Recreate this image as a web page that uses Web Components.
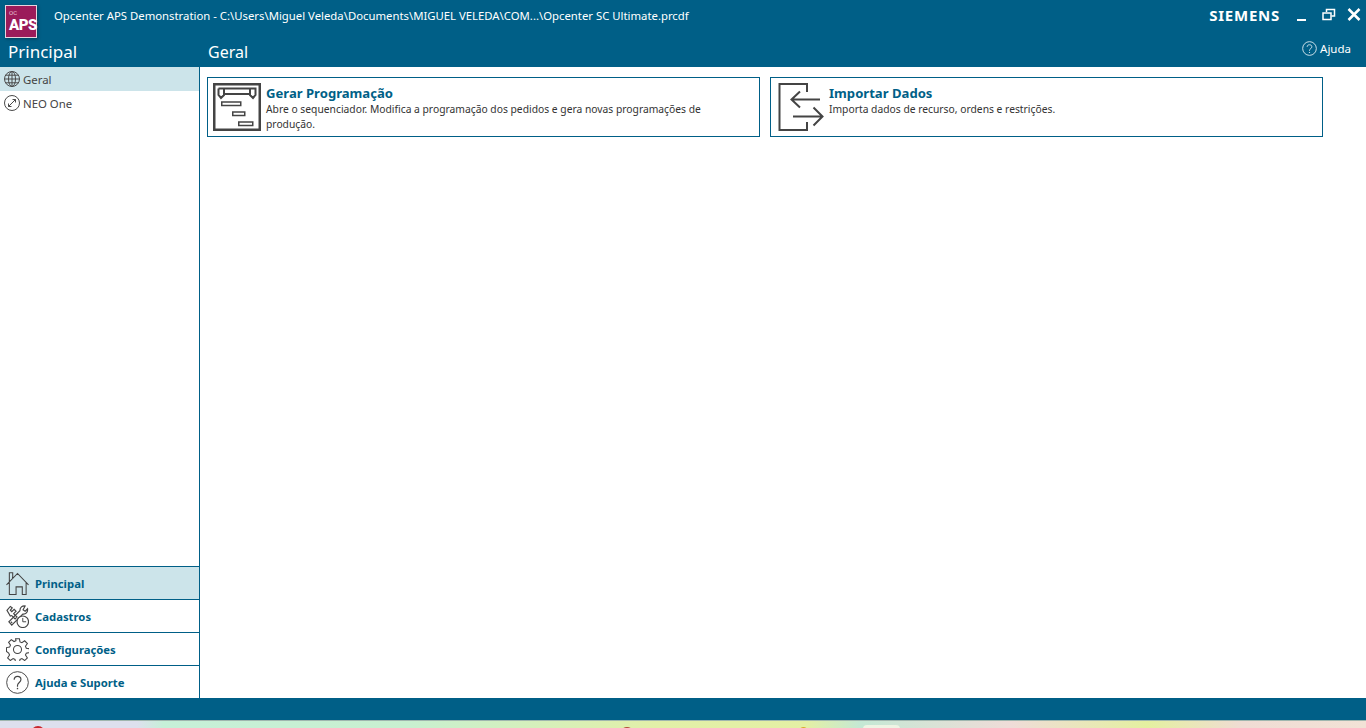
<!DOCTYPE html>
<html lang="pt">
<head>
<meta charset="utf-8">
<title>Opcenter APS</title>
<style>
  html, body { margin: 0; height: 100%; overflow: hidden; background: #fff; }
  body { font-family: "Noto Sans", "Open Sans", sans-serif; color: #333; }
</style>
</head>
<body>
<aps-app></aps-app>

<template id="icons">
  <svg data-name="globe" viewBox="1 1 16 16" fill="none" stroke="#4a4a4a" stroke-width="1"><circle cx="9" cy="9" r="7.500"/><ellipse cx="9" cy="9" rx="3.500" ry="7.500"/><path d="M9 1.500v15M1.500 9h15M2.600 5.200h12.800M2.600 12.800h12.800"/></svg>
  <svg data-name="link" viewBox="1 1 16 16" fill="none" stroke="#4a4a4a" stroke-width="1"><circle cx="9" cy="9" r="7.500"/><path d="M5.500 12.500l7-7M9.500 5.500h3v3M5.500 9.500v3h3"/></svg>
  <svg data-name="home" viewBox="0 0 24 24" fill="none" stroke="#444" stroke-width="1.100"><path d="M.5 13.500 12 1.500l11.500 12M3.500 10V.8h3.500v5.500M3.500 10v13.500h7v-8h6.500v8h4V11"/></svg>
  <svg data-name="tools" viewBox="0 0 24 24" fill="none" stroke="#444" stroke-width="1.200"><path d="M1 5.500 4.500 1.500 6.500 3 4.500 5.500l1.500 1.500 2.500-2.500 2 2L8 9l3.500 3.500-2 2L6 11 4.500 11.500Z"/><path d="M20 1c-3-.5-5.500 1.500-5.500 5L3 17.500 6 21 17.500 9.500c3 .5 5.500-2 5-5.500L20 6.500 17.800 5 20 1Z"/><path d="M5 17.500l1.500 1.500"/><circle cx="17.500" cy="17.500" r="6" fill="#fff"/><path d="M17.500 13.500v4h3.500" stroke-width="1"/></svg>
  <svg data-name="gear" viewBox="0 0 24 24" fill="none" stroke="#444" stroke-width="1.100"><circle cx="12" cy="12" r="4.200"/><path d="M10 .7h4l.6 3.400 2 .8 2.900-2 2.800 2.900-2 2.800.9 2 3.300.6v4l-3.300.6-.9 2 2 2.900-2.800 2.800-2.900-2-2 .9-.6 3.300h-4l-.6-3.300-2-.9-2.900 2-2.800-2.800 2-2.900-.9-2L.5 14v-4l3.300-.6.900-2-2-2.800 2.800-2.900 2.900 2 2-.8Z"/></svg>
  <svg data-name="help" viewBox="0 0 24 24" fill="none" stroke="#444" stroke-width="1"><circle cx="12" cy="12" r="11.300"/><path d="M8.500 9.200C8.500 6.800 10 5.600 12 5.600s3.600 1.300 3.600 3.300c0 3-3.600 3.200-3.600 6.300v1.300" stroke-width="1.200"/><path d="M11.300 18.300h1.400" stroke-width="1.500"/></svg>
  <svg data-name="gantt" viewBox="0 0 48 48" fill="none" stroke="#444"><rect x="1.250" y="1.250" width="45.500" height="45.500" stroke-width="2.500"/><path d="M5.500 5.500h37v6.500L40 15l-3-3V5.500M5.500 5.500v6.500L8 15l3-3V5.500M11 11h26" stroke-width="2"/><rect x="8.750" y="19" width="19" height="3.500" stroke-width="1.500"/><rect x="19.750" y="29" width="12" height="3.500" stroke-width="1.500"/><rect x="25.750" y="39" width="14" height="3.500" stroke-width="1.500"/></svg>
  <svg data-name="import" viewBox="0 0 48 48" fill="none" stroke="#444" stroke-width="2"><path d="M31 9V1H3.500v46H31v-8"/><path d="M44 16.500H15.500M24 8.500l-8.500 8 8.500 8"/><path d="M17 33.500h29M37.500 24.500l9 9-9 9"/></svg>
</template>

<script>
const iconBank = document.getElementById("icons").content;

function iconMarkup(name) {
  const svg = iconBank.querySelector(`[data-name="${name}"]`);
  return svg ? svg.outerHTML : "";
}

// small list row in the top of the side panel
class SideRow extends HTMLElement {
  constructor() {
    super();
    this.attachShadow({ mode: "open" });
  }
  connectedCallback() {
    const active = this.hasAttribute("active");
    this.shadowRoot.innerHTML = `
      <style>
        :host { display: flex; align-items: center; height: 24px; padding-left: 4px; gap: 3px;
                font-size: 11.4px; color: #444; background: ${active ? "#cce4ea" : "transparent"}; }
        svg { width: 16px; height: 16px; flex: none; }
      </style>
      ${iconMarkup(this.getAttribute("icon"))}<span><slot></slot></span>`;
  }
}

// big section button at the bottom of the side panel
class NavRow extends HTMLElement {
  constructor() {
    super();
    this.attachShadow({ mode: "open" });
  }
  connectedCallback() {
    const active = this.hasAttribute("active");
    this.shadowRoot.innerHTML = `
      <style>
        :host { display: flex; align-items: center; height: 32px; padding-left: 6px; gap: 6px;
                border-top: 1px solid #005f87; font-size: 11.3px; font-weight: 700; color: #005f87;
                background: ${active ? "#cce4ea" : "transparent"}; }
        svg { width: 23px; height: 23px; flex: none; }
      </style>
      ${iconMarkup(this.getAttribute("icon"))}<span><slot></slot></span>`;
  }
}

class ActionCard extends HTMLElement {
  constructor() {
    super();
    this.attachShadow({ mode: "open" });
  }
  connectedCallback() {
    this.shadowRoot.innerHTML = `
      <style>
        :host { display: flex; box-sizing: border-box; height: 60px; width: 553px; border: 1px solid #005f87;
                padding: 5px 0 0 5px; gap: 5px; }
        svg { width: 48px; height: 48px; flex: none; }
        h3 { margin: 1px 0 0; font-size: 13.1px; line-height: 18px; font-weight: 700; color: #005f87; }
        p { margin: 0; max-width: 470px; font-size: 10.3px; line-height: 15px; color: #333; }
      </style>
      ${iconMarkup(this.getAttribute("icon"))}
      <div><h3>${this.getAttribute("title")}</h3><p><slot></slot></p></div>`;
  }
}

class TitleBar extends HTMLElement {
  constructor() {
    super();
    this.attachShadow({ mode: "open" });
  }
  connectedCallback() {
    this.shadowRoot.innerHTML = `
      <style>
        :host { display: block; background: #005f87; color: #fff; height: 67px; }
        .top { display: flex; align-items: flex-start; height: 38px; }
        .logo { box-sizing: border-box; width: 32px; height: 33px; margin: 5px 0 0 5px; background: #9b1b5a;
                border: 1px solid #e8d5df; display: flex; flex-direction: column; padding: 3.5px 0 0 3px; color: #fff;
                box-shadow: 1px 1px 3px rgba(0,0,0,.35); font-family: Roboto, sans-serif; font-weight: 700; }
        .logo small { font-size: 6px; line-height: 6px; font-weight: 400; color: #e9c6d8; }
        .logo b { margin-top: 2px; font-size: 15px; line-height: 15px; letter-spacing: -.5px; }
        .path { margin: 7px 0 0 17px; font-size: 11.34px; line-height: 18px; white-space: nowrap; flex: 1; }
        .brand { font-size: 15px; font-weight: 700; letter-spacing: .75px; line-height: 18px; margin-top: 6px; }
        .win { display: flex; gap: 10px; margin: 7px 4px 0 17px; }
        .win svg { width: 15px; height: 15px; display: block; }
        .bottom { display: flex; height: 27px; align-items: center; }
        .left { width: 208px; padding-left: 8px; box-sizing: border-box; font-size: 17px; }
        .mid { flex: 1; font-size: 16px; }
        .help { display: flex; align-items: center; gap: 3px; font-size: 11.5px; margin: -6px 15px 0 0; }
        .help svg { width: 15px; height: 15px; }
      </style>
      <div class="top">
        <div class="logo"><small>OC</small><b>APS</b></div>
        <div class="path">Opcenter APS Demonstration - C:\\Users\\Miguel Veleda\\Documents\\MIGUEL VELEDA\\COM...\\Opcenter SC Ultimate.prcdf</div>
        <div class="brand">SIEMENS</div>
        <div class="win">
          <svg viewBox="0 0 15 15" fill="none" stroke="#fff" stroke-width="2"><path d="M0 13h9"/></svg>
          <svg viewBox="0 0 15 15" fill="none" stroke="#fff" stroke-width="1.500"><rect x="1" y="6" width="8" height="6.500"/><path d="M4.500 5V2.500h8V9h-3"/></svg>
          <svg viewBox="0 0 15 15" fill="none" stroke="#fff" stroke-width="2.500"><path d="M1.500 2l11 11M12.500 2l-11 11"/></svg>
        </div>
      </div>
      <div class="bottom">
        <div class="left">Principal</div>
        <div class="mid">Geral</div>
        <div class="help">
          <svg viewBox="0 0 16 16" fill="none" stroke="#d5e6ee" stroke-width="1"><circle cx="8" cy="8" r="7.300"/><path d="M5.500 6.200C5.500 4.700 6.600 4 8 4s2.500.8 2.500 2.100c0 2-2.500 2.100-2.500 4.100v.5M7.400 12.200h1.200"/></svg>
          <span>Ajuda</span>
        </div>
      </div>`;
  }
}

class SidePanel extends HTMLElement {
  constructor() {
    super();
    this.attachShadow({ mode: "open" });
  }
  connectedCallback() {
    this.shadowRoot.innerHTML = `
      <style>
        :host { display: flex; flex-direction: column; box-sizing: border-box; width: 200px; border-right: 1px solid #005f87; }
        .list { flex: 1; }
      </style>
      <div class="list"><slot name="list"></slot></div>
      <div><slot name="nav"></slot></div>`;
  }
}

class ApsApp extends HTMLElement {
  constructor() {
    super();
    this.attachShadow({ mode: "open" });
  }
  connectedCallback() {
    this.shadowRoot.innerHTML = `
      <style>
        :host { display: flex; flex-direction: column; height: 728px; }
        .body { flex: 1; display: flex; min-height: 0; }
        main { flex: 1; display: flex; gap: 10px; padding: 10px 0 0 7px; align-items: flex-start; }
        .status { height: 22px; background: #005f87; border-bottom: 1px solid #9fb6ae; }
        .desk { position: relative; height: 7px; overflow: hidden;
                background: linear-gradient(90deg, #dde0ee 0, #dde0ee 10%, #c6f0d8 12%, #c8f0d0 30%, #e2f0a8 48%, #e4f0a4 59%, #c4e8d4 63%, #efdcd8 74%, #e4f0a0 84%, #f0dcd4 91%, #f2e2d6 100%); }
        .dot { position: absolute; top: 5px; width: 14px; height: 8px; border-radius: 7px 7px 0 0; }
        .pill { position: absolute; left: 863px; top: 4px; width: 37px; height: 8px; border-radius: 4px; background: #eef4e4; }
      </style>
      <title-bar></title-bar>
      <div class="body">
        <side-panel>
          <side-row slot="list" icon="globe" active>Geral</side-row>
          <side-row slot="list" icon="link">NEO One</side-row>
          <nav-row slot="nav" icon="home" active>Principal</nav-row>
          <nav-row slot="nav" icon="tools">Cadastros</nav-row>
          <nav-row slot="nav" icon="gear">Configurações</nav-row>
          <nav-row slot="nav" icon="help">Ajuda e Suporte</nav-row>
        </side-panel>
        <main>
          <action-card icon="gantt" title="Gerar Programação">Abre o sequenciador. Modifica a programação dos pedidos e gera novas programações de produção.</action-card>
          <action-card icon="import" title="Importar Dados">Importa dados de recurso, ordens e restrições.</action-card>
        </main>
      </div>
      <div class="status"></div>
      <div class="desk">
        <span class="dot" style="left:31px;background:#c8262c"></span>
        <span class="dot" style="left:620px;top:6px;background:#b5483a"></span>
        <span class="dot" style="left:799px;top:6px;width:9px;background:#d8a92c"></span>
        <span class="pill"></span>
      </div>`;
  }
}

customElements.define("side-row", SideRow);
customElements.define("nav-row", NavRow);
customElements.define("action-card", ActionCard);
customElements.define("title-bar", TitleBar);
customElements.define("side-panel", SidePanel);
customElements.define("aps-app", ApsApp);
</script>
</body>
</html>
